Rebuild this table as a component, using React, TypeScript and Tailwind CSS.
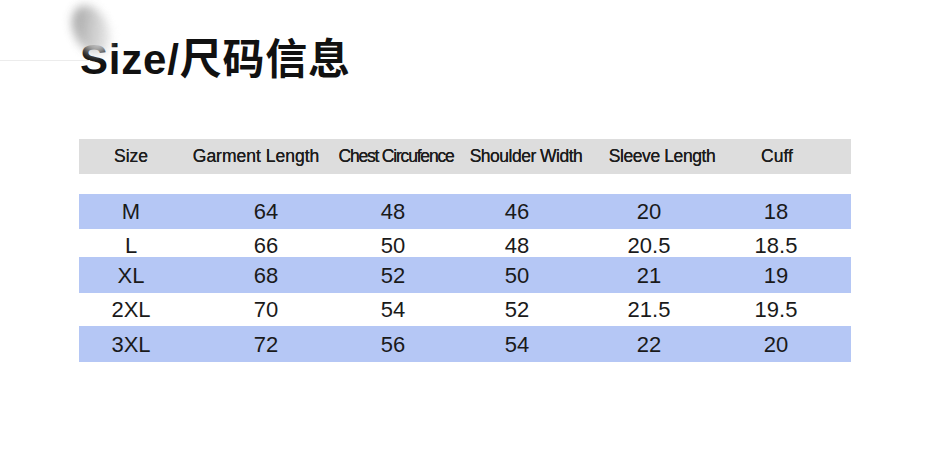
const headers = [
  { label: "Size", cls: "" },
  { label: "Garment Length", cls: "" },
  { label: "Chest Circufence", cls: "tracking-[-1.2px]" },
  { label: "Shoulder Width", cls: "tracking-[-0.5px]" },
  { label: "Sleeve Length", cls: "tracking-[-0.4px]" },
  { label: "Cuff", cls: "" },
];

const rows = [
  { size: "M", vals: ["64", "48", "46", "20", "18"], h: "h-[35px]", blue: true },
  { size: "L", vals: ["66", "50", "48", "20.5", "18.5"], h: "h-[28px]", blue: false },
  { size: "XL", vals: ["68", "52", "50", "21", "19"], h: "h-[36px]", blue: true },
  { size: "2XL", vals: ["70", "54", "52", "21.5", "19.5"], h: "h-[33px]", blue: false },
  { size: "3XL", vals: ["72", "56", "54", "22", "20"], h: "h-[36px]", blue: true },
];

export default function App() {
  return (
    <div
      className="relative w-[925px] h-[475px] bg-white overflow-hidden pl-[80px] pt-[38px]"
      style={{ fontFamily: '"Liberation Sans", Arial, "Noto Sans CJK SC", sans-serif' }}
    >
      {/* Title */}
      <h1 className="relative text-[42px] leading-[44px] font-bold tracking-[0.8px] text-[#111] whitespace-nowrap">
        Size/尺码信息
      </h1>

      {/* blurred smudge over the title */}
      <div className="absolute left-[74px] top-[4px] w-[34px] h-[52px] rounded-[50%] bg-gradient-to-br from-[#8a8a8a] via-[#c4c4c4] to-[#f4f4f4] blur-[5px] opacity-90 rotate-[-25deg]" />
      <div className="absolute left-0 top-[60px] w-[90px] h-px bg-[#ececec]" />

      {/* Table */}
      <div className="mt-[57px] -ml-px w-[772px]">
        <div className="grid grid-cols-[104px_146px_134px_126px_146px_84px_1fr] items-center h-[35px] bg-[#dddddd] text-[17.5px] text-[#1c1c1c] [text-shadow:0_0_0.4px_#1c1c1c]">
          {headers.map((h) => (
            <div key={h.label} className={`text-center whitespace-nowrap ${h.cls}`}>
              {h.label}
            </div>
          ))}
        </div>

        <div className="mt-[20px] flex flex-col">
          {rows.map((r) => (
            <div
              key={r.size}
              className={`grid grid-cols-[104px_166px_88px_160px_104px_1fr] items-center text-[22px] text-[#1a1a1a] ${r.h} ${
                r.blue ? "bg-[#b5c7f5]" : "bg-white"
              }`}
            >
              <div className="text-center">{r.size}</div>
              {r.vals.map((v, i) => (
                <div key={i} className="text-center">
                  {v}
                </div>
              ))}
            </div>
          ))}
        </div>
      </div>
    </div>
  );
}
